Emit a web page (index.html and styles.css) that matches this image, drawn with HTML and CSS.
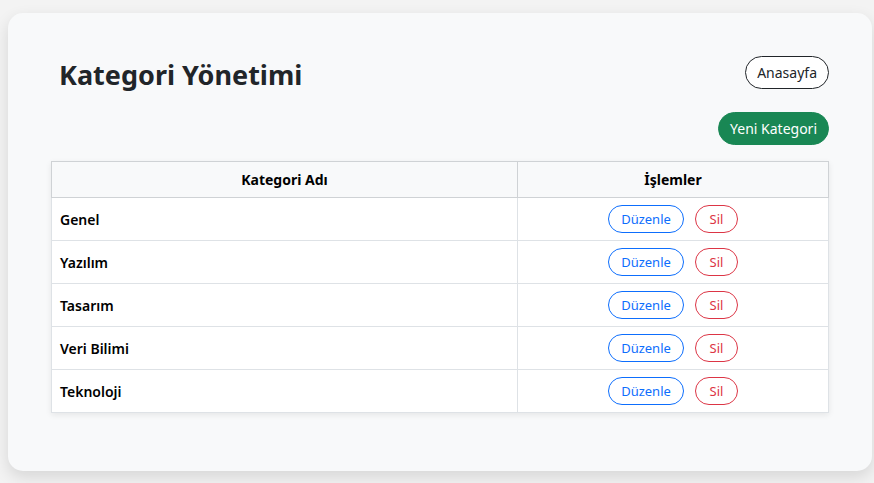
FILE: index.html
```html
<!DOCTYPE html>
<html lang="tr">
<head>
<meta charset="utf-8">
<title>Kategori Yönetimi</title>
<link rel="stylesheet" href="styles.css">
</head>
<body>
<div class="card">
  <div class="top">
    <h1 class="title">Kategori Yönetimi</h1>
    <a class="btn btn-outline-dark" href="#">Anasayfa</a>
  </div>
  <div class="actions">
    <a class="btn btn-success" href="#">Yeni Kategori</a>
  </div>
  <table class="table">
    <thead>
      <tr><th class="col-name">Kategori Adı</th><th>İşlemler</th></tr>
    </thead>
    <tbody>
      <tr><td class="name">Genel</td><td class="ops"><a class="btn-sm btn-blue" href="#">Düzenle</a><a class="btn-sm btn-red" href="#">Sil</a></td></tr>
      <tr><td class="name">Yazılım</td><td class="ops"><a class="btn-sm btn-blue" href="#">Düzenle</a><a class="btn-sm btn-red" href="#">Sil</a></td></tr>
      <tr><td class="name">Tasarım</td><td class="ops"><a class="btn-sm btn-blue" href="#">Düzenle</a><a class="btn-sm btn-red" href="#">Sil</a></td></tr>
      <tr><td class="name">Veri Bilimi</td><td class="ops"><a class="btn-sm btn-blue" href="#">Düzenle</a><a class="btn-sm btn-red" href="#">Sil</a></td></tr>
      <tr><td class="name">Teknoloji</td><td class="ops"><a class="btn-sm btn-blue" href="#">Düzenle</a><a class="btn-sm btn-red" href="#">Sil</a></td></tr>
    </tbody>
  </table>
</div>
</body>
</html>
```
FILE: styles.css
```css
* { box-sizing: border-box; }
html, body { margin: 0; padding: 0; }
body {
  background: #f3f3f3;
  font-family: "Noto Sans", "Open Sans", sans-serif;
  color: #212529;
  padding: 13px 2px 12px 8px;
}
.card {
  background: #f8f9fa;
  border-radius: 15px;
  box-shadow: 0 6px 16px rgba(0,0,0,0.12);
  padding: 43px 43px 58px 43px;
  height: 458px;
}
.top {
  display: flex;
  justify-content: space-between;
  align-items: flex-start;
}
.title {
  margin: 0 0 0 8px;
  padding-top: 2px;
  font-size: 27px;
  font-weight: 700;
  line-height: 34px;
  color: #212529;
}
.btn {
  display: inline-flex;
  align-items: center;
  justify-content: center;
  border-radius: 17px;
  font-size: 14px;
  text-decoration: none;
  height: 33px;
  padding: 0 11px;
}
.btn-outline-dark {
  border: 1px solid #212529;
  color: #212529;
  background: #fff;
}
.btn-success {
  background: #198754;
  color: #fff;
  border: 1px solid #198754;
  padding: 0 11px;
}
.actions {
  display: flex;
  justify-content: flex-end;
  margin-top: 20px;
  margin-bottom: 16px;
}
.table {
  width: 100%;
  border-collapse: collapse;
  background: #fff;
  box-shadow: 0 2px 6px rgba(0,0,0,0.08);
  font-size: 14px;
}
.table th {
  background: #f8f9fa;
  border: 1px solid #cfd2d5;
  height: 36px;
  font-weight: 700;
  color: #000;
  text-align: center;
  padding: 0 8px;
}
.table th.col-name { width: 466px; }
.table td {
  border: 1px solid #dee2e6;
  height: 43px;
  padding: 0 8px;
}
.name {
  font-weight: 600;
  color: #000;
}
.ops {
  text-align: center;
  font-size: 0;
}
.btn-sm {
  display: inline-flex;
  align-items: center;
  justify-content: center;
  height: 28px;
  border-radius: 14px;
  font-size: 13px;
  text-decoration: none;
  padding: 0 14px;
  background: #fff;
  vertical-align: middle;
}
.btn-blue { border: 1px solid #0d6efd; color: #0d6efd; width: 76px; }
.btn-red { border: 1px solid #dc3545; color: #dc3545; width: 43px; margin-left: 11px; }
```
